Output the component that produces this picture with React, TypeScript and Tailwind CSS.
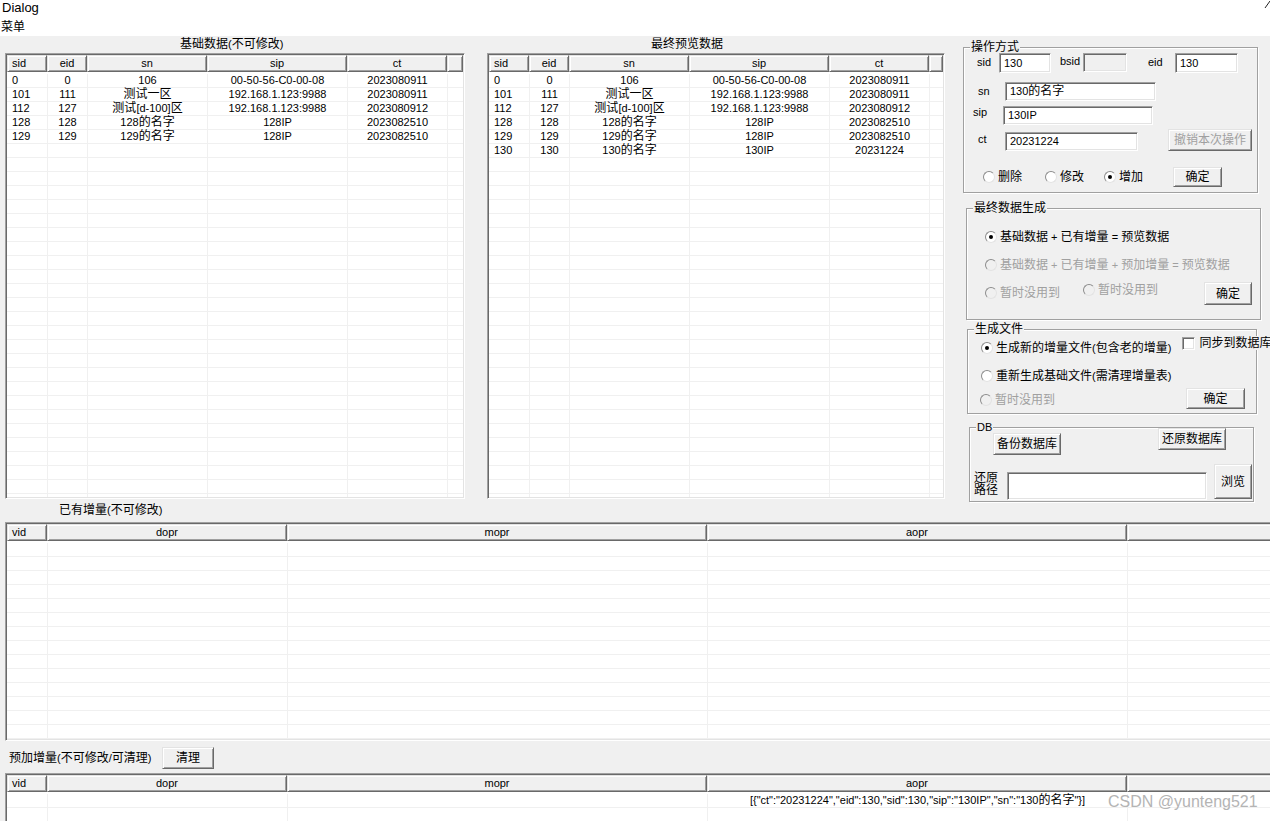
import React from "react";

const CJK = /([\u2E80-\u9FFF\uFF00-\uFFEF]+)/;

// CJK runs are drawn a pixel larger than the Latin text, as the dialog font does
function T({ children }: { children: string }) {
  return (
    <>
      {children.split(CJK).map((part, i) =>
        i % 2 ? (
          <span key={i} className="text-[12px]">
            {part}
          </span>
        ) : (
          part
        )
      )}
    </>
  );
}

const sunken =
  "border border-t-[#a0a0a0] border-l-[#a0a0a0] border-r-white border-b-white shadow-[inset_1px_1px_0_#696969,inset_-1px_-1px_0_#e3e3e3]";
const raised =
  "border border-t-[#e3e3e3] border-l-[#e3e3e3] border-r-[#696969] border-b-[#696969] shadow-[inset_1px_1px_0_#fff,inset_-1px_-1px_0_#a0a0a0]";
const btn = `${raised} bg-[#f0f0f0] flex items-center justify-center leading-[14px] whitespace-nowrap shrink-0`;
const input = `${sunken} bg-white flex items-center pl-[4px] leading-[13px] whitespace-nowrap shrink-0`;

type Col = { label: string; w: string; left?: boolean };

const topCols: Col[] = [
  { label: "sid", w: "w-[40px]", left: true },
  { label: "eid", w: "w-[40px]" },
  { label: "sn", w: "w-[120px]" },
  { label: "sip", w: "w-[140px]" },
  { label: "ct", w: "w-[100px]" },
];

const logCols: Col[] = [
  { label: "vid", w: "w-[40px]", left: true },
  { label: "dopr", w: "w-[240px]" },
  { label: "mopr", w: "w-[420px]" },
  { label: "aopr", w: "w-[420px]" },
];

const baseRows = [
  ["0", "0", "106", "00-50-56-C0-00-08", "2023080911"],
  ["101", "111", "测试一区", "192.168.1.123:9988", "2023080911"],
  ["112", "127", "测试[d-100]区", "192.168.1.123:9988", "2023080912"],
  ["128", "128", "128的名字", "128IP", "2023082510"],
  ["129", "129", "129的名字", "128IP", "2023082510"],
];

const previewRows = [...baseRows, ["130", "130", "130的名字", "130IP", "20231224"]];

const pendingRows = [
  ["", "", "", '[{"ct":"20231224","eid":130,"sid":130,"sip":"130IP","sn":"130的名字"}]'],
];

function Grid({
  cols,
  rows,
  lines,
  className,
}: {
  cols: Col[];
  rows: string[][];
  lines: number;
  className: string;
}) {
  const body = Array.from({ length: lines }, (_, i) => rows[i] ?? []);
  return (
    <div className={`${sunken} bg-white p-px flex flex-col shrink-0 ${className}`}>
      <div className="flex h-[17px] shrink-0">
        {cols.map((c) => (
          <div
            key={c.label}
            className={`${c.w} ${raised} ${
              c.left ? "pl-[4px]" : "justify-center"
            } shrink-0 bg-[#f0f0f0] flex items-center leading-[13px]`}
          >
            {c.label}
          </div>
        ))}
        <div className={`flex-1 ${raised} bg-[#f0f0f0]`} />
      </div>
      <div className="flex-1 min-h-0 overflow-hidden pt-[2px]">
        {body.map((r, i) => (
          <div key={i} className="flex h-[14px]">
            {cols.map((c, j) => (
              <div
                key={j}
                className={`${c.w} shrink-0 border-b border-[#f0f0f0] leading-[13px] whitespace-nowrap ${
                  j ? "border-l text-center" : "pl-[5px]"
                }`}
              >
                {r[j] ? <T>{r[j]}</T> : null}
              </div>
            ))}
            <div className="flex-1 border-b border-l border-[#f0f0f0]" />
          </div>
        ))}
      </div>
    </div>
  );
}

function Radio({ on, off }: { on?: boolean; off?: boolean }) {
  return (
    <span
      className={`w-[12px] h-[12px] rounded-full border border-t-[#8c8c8c] border-l-[#8c8c8c] border-r-[#e3e3e3] border-b-[#e3e3e3] flex items-center justify-center shrink-0 ${
        off ? "bg-[#f0f0f0]" : "bg-white"
      }`}
    >
      {on && <span className="w-[4px] h-[4px] rounded-full bg-black" />}
    </span>
  );
}

function Opt({
  label,
  on,
  off,
  className,
}: {
  label: string;
  on?: boolean;
  off?: boolean;
  className: string;
}) {
  return (
    <div
      className={`flex items-center gap-[3px] h-[14px] leading-[14px] whitespace-nowrap shrink-0 ${
        off ? "text-[#a0a0a0]" : ""
      } ${className}`}
    >
      <Radio on={on} off={off} />
      <span>
        <T>{label}</T>
      </span>
    </div>
  );
}

function Group({
  title,
  className,
  children,
}: {
  title: string;
  className: string;
  children: React.ReactNode;
}) {
  return (
    <fieldset
      className={`min-w-0 border border-[#a0a0a0] shadow-[inset_1px_1px_0_#fff,1px_1px_0_#fff] ${className}`}
    >
      <legend className="ml-[6px] px-[1px] leading-[14px] bg-[#f0f0f0]">
        <T>{title}</T>
      </legend>
      {children}
    </fieldset>
  );
}

function RightPanel() {
  return (
    <div className="w-[307px] shrink-0 ml-[18px] mt-[4px] flex flex-col items-start">
      <Group title="操作方式" className="w-[295px] pb-[5px]">
        <div className="flex items-start -mt-[1px] h-[20px]">
          <span className="ml-[13px] w-[22px] mt-[3px] leading-[13px]">sid</span>
          <div className={`${input} w-[52px] h-[20px]`}>130</div>
          <span className="ml-[9px] w-[23px] mt-[2px] leading-[13px]">bsid</span>
          <div className={`${sunken} bg-[#f0f0f0] w-[44px] h-[19px] shrink-0`} />
          <span className="ml-[21px] w-[27px] mt-[3px] leading-[13px]">eid</span>
          <div className={`${input} w-[63px] h-[20px]`}>130</div>
        </div>
        <div className="flex items-start mt-[9px]">
          <span className="ml-[14px] w-[27px] mt-[3px] leading-[13px]">sn</span>
          <div className={`${input} w-[151px] h-[19px]`}>
            <T>130的名字</T>
          </div>
        </div>
        <div className="flex items-start mt-[5px]">
          <span className="ml-[9px] w-[30px] mt-0 leading-[13px]">sip</span>
          <div className={`${input} w-[150px] h-[19px]`}>130IP</div>
        </div>
        <div className="flex items-start mt-[4px] h-[22px]">
          <span className="ml-[14px] w-[27px] mt-[4px] leading-[13px]">ct</span>
          <div className={`${input} mt-[3px] w-[133px] h-[19px]`}>20231224</div>
          <button type="button" className={`${btn} ml-[30px] w-[84px] h-[22px] text-[#a0a0a0]`}>
            <T>撤销本次操作</T>
          </button>
        </div>
        <div className="flex items-start mt-[16px] h-[20px]">
          <Opt label="删除" className="ml-[19px] mt-[3px]" />
          <Opt label="修改" className="ml-[23px] mt-[3px]" />
          <Opt label="增加" on className="ml-[20px] mt-[3px]" />
          <button type="button" className={`${btn} ml-[30px] w-[49px] h-[20px]`}>
            <T>确定</T>
          </button>
        </div>
      </Group>

      <Group title="最终数据生成" className="ml-[3px] mt-[8px] w-[295px] pb-[14px]">
        <Opt label="基础数据 + 已有增量 = 预览数据" on className="ml-[18px] mt-[15px]" />
        <Opt
          label="基础数据 + 已有增量 + 预加增量 = 预览数据"
          off
          className="ml-[18px] mt-[14px]"
        />
        <div className="flex items-start mt-[10px] h-[23px]">
          <Opt label="暂时没用到" off className="ml-[18px] mt-[4px]" />
          <Opt label="暂时没用到" off className="ml-[23px] mt-[1px]" />
          <button type="button" className={`${btn} ml-auto mr-[8px] w-[48px] h-[23px]`}>
            <T>确定</T>
          </button>
        </div>
      </Group>

      <Group title="生成文件" className="ml-[4px] mt-[2px] w-[290px] pb-[4px]">
        <div className="flex items-start mt-[1px]">
          <Opt label="生成新的增量文件(包含老的增量)" on className="ml-[13px] mt-[4px]" />
          <div className="flex items-start ml-[11px] shrink-0">
            <span className={`${sunken} bg-white w-[13px] h-[13px] shrink-0`} />
            <span className="ml-[4px] -mt-[1px] pr-[4px] leading-[14px] whitespace-nowrap bg-[#f0f0f0]">
              <T>同步到数据库</T>
            </span>
          </div>
        </div>
        <Opt label="重新生成基础文件(需清理增量表)" className="ml-[13px] mt-[14px]" />
        <div className="flex items-start mt-[5px]">
          <Opt label="暂时没用到" off className="ml-[12px] mt-[5px]" />
          <button type="button" className={`${btn} ml-auto mr-[11px] w-[59px] h-[21px]`}>
            <T>确定</T>
          </button>
        </div>
      </Group>

      <Group title="DB" className="ml-[6px] mt-[6px] w-[285px] pb-[1px]">
        <div className="flex items-start -mt-[6px]">
          <button type="button" className={`${btn} ml-[23px] mt-[5px] w-[68px] h-[22px]`}>
            <T>备份数据库</T>
          </button>
          <button type="button" className={`${btn} ml-[97px] w-[68px] h-[22px]`}>
            <T>还原数据库</T>
          </button>
        </div>
        <div className="flex items-start mt-[9px]">
          <div className="ml-[4px] w-[24px] mt-[8px] leading-[12px] shrink-0">
            <T>还原</T>
            <br />
            <T>路径</T>
          </div>
          <div className={`${input} ml-[9px] mt-[8px] w-[200px] h-[28px]`} />
          <button type="button" className={`${btn} ml-[7px] w-[38px] h-[35px]`}>
            <T>浏览</T>
          </button>
        </div>
      </Group>
    </div>
  );
}

export default function App() {
  return (
    <div className="relative w-[1270px] h-[821px] overflow-hidden bg-[#f0f0f0] text-black text-[11px] font-['Liberation_Sans','Noto_Sans_CJK_SC',sans-serif]">
      <div className="h-[36px] bg-white">
        <div className="flex justify-between h-[13px]">
          <div className="pl-[2px] text-[13px] leading-[15px]">Dialog</div>
          <svg width="6" height="9" viewBox="0 0 6 9">
            <path d="M1 8 L6 1" stroke="#222" strokeWidth="1" fill="none" />
          </svg>
        </div>
        <div className="mt-[7px] pl-[1px] leading-[14px]">
          <T>菜单</T>
        </div>
      </div>

      <div className="flex h-[463px] pl-[5px]">
        <div className="w-[460px] shrink-0 flex flex-col">
          <div className="h-[17px] leading-[17px] pl-[175px] whitespace-nowrap">
            <T>基础数据(不可修改)</T>
          </div>
          <Grid cols={topCols} rows={baseRows} lines={31} className="h-[446px]" />
        </div>
        <div className="w-[458px] shrink-0 ml-[22px] flex flex-col">
          <div className="h-[17px] leading-[17px] pl-[164px] whitespace-nowrap">
            <T>最终预览数据</T>
          </div>
          <Grid cols={topCols} rows={previewRows} lines={31} className="h-[446px]" />
        </div>
        <RightPanel />
      </div>

      <div className="h-[23px] leading-[23px] pl-[59px]">
        <T>已有增量(不可修改)</T>
      </div>
      <Grid cols={logCols} rows={[]} lines={14} className="ml-[5px] w-[1275px] h-[219px]" />

      <div className="flex items-center h-[32px] pt-[2px]">
        <div className="w-[162px] pl-[9px] leading-[14px] whitespace-nowrap shrink-0">
          <T>预加增量(不可修改/可清理)</T>
        </div>
        <button type="button" className={`${btn} w-[52px] h-[22px]`}>
          <T>清理</T>
        </button>
      </div>
      <Grid cols={logCols} rows={pendingRows} lines={3} className="ml-[5px] w-[1275px] h-[60px]" />

      <div className="absolute left-[1108px] top-[792px] text-[16px] leading-[20px] text-[#b4b4b4] whitespace-nowrap">
        CSDN @yunteng521
      </div>
    </div>
  );
}
